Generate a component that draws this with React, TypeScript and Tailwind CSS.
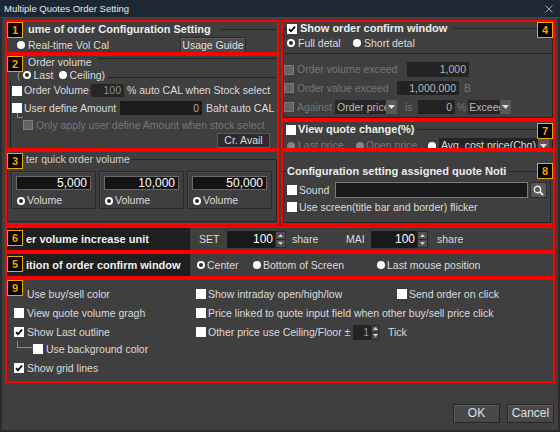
import React from 'react';

// small building blocks for the dark Windows-style dialog

function Badge({ n, className = '' }: { n: string; className?: string }) {
  return (
    <div
      className={`absolute z-10 flex h-[16px] w-[16px] items-center justify-center border border-[#f5a300] bg-black text-[11px] font-bold leading-none text-[#f5a300] ${className}`}
    >
      {n}
    </div>
  );
}

function Check({ checked = false, disabled = false }: { checked?: boolean; disabled?: boolean }) {
  return (
    <span
      className={`flex h-[10px] w-[10px] shrink-0 items-center justify-center ${
        disabled ? 'border border-[#7c7c7c] bg-[#646464]' : 'bg-white'
      }`}
    >
      {checked && (
        <svg width="8" height="8" viewBox="0 0 8 8">
          <path d="M1 4.2 L3 6.2 L7 1.6" stroke="#000" strokeWidth="1.7" fill="none" />
        </svg>
      )}
    </span>
  );
}

function Radio({ ring = false, dim = false }: { ring?: boolean; dim?: boolean }) {
  if (ring) {
    return (
      <span
        className={`h-[8px] w-[8px] shrink-0 rounded-full border-2 bg-[#2a2a2a] ${
          dim ? 'border-[#8a8a8a]' : 'border-white'
        }`}
      />
    );
  }
  return <span className={`h-[8px] w-[8px] shrink-0 rounded-full ${dim ? 'bg-[#858585]' : 'bg-white'}`} />;
}

function Spin({ className = '' }: { className?: string }) {
  return (
    <span className={`flex shrink-0 flex-col border border-[#2a2a2a] bg-[#4e4e4e] ${className}`}>
      <span className="flex flex-1 items-center justify-center border-b border-[#2a2a2a]">
        <svg width="5" height="3" viewBox="0 0 5 3">
          <path d="M0 3 L2.5 0 L5 3 Z" fill="#d0d0d0" />
        </svg>
      </span>
      <span className="flex flex-1 items-center justify-center">
        <svg width="5" height="3" viewBox="0 0 5 3">
          <path d="M0 0 L2.5 3 L5 0 Z" fill="#d0d0d0" />
        </svg>
      </span>
    </span>
  );
}

function DropBtn() {
  return (
    <span className="flex h-full w-[11px] shrink-0 items-center justify-center bg-[#585858]">
      <svg width="7" height="4" viewBox="0 0 7 4">
        <path d="M0 0 L3.5 4 L7 0 Z" fill="#e0e0e0" />
      </svg>
    </span>
  );
}

function Line({ className = '' }: { className?: string }) {
  return <span className={`h-px flex-1 bg-[#232323] ${className}`} />;
}

export default function App() {
  return (
    <div className="flex h-[432px] w-[560px] flex-col overflow-hidden bg-[#3f3f3f] font-['Liberation_Sans',Arial,sans-serif] text-[10.5px] leading-[13px] text-[#dcdcdc]">
      {/* title bar */}
      <div className="flex h-[18px] shrink-0 items-center justify-between border-b border-[#3a4858] bg-[#1d2733] pl-[4px] pr-[7px] text-[9.5px] text-[#e8e8e8]">
        <span>Multiple Quotes Order Setting</span>
        <svg width="8" height="8" viewBox="0 0 8 8">
          <path d="M0.5 0.5 L7.5 7.5 M7.5 0.5 L0.5 7.5" stroke="#9aa3ad" strokeWidth="1" />
        </svg>
      </div>

      <div className="flex flex-1 flex-col border-x-2 border-b-2 border-[#2b2b2b] px-[3px] pt-[2px]">
        <div className="flex gap-[2px]">
          {/* left column */}
          <div className="flex w-[274px] flex-col">
            {/* 1 */}
            <section className="relative h-[34px] overflow-hidden border-2 border-[#ff0000]">
              <Badge n="1" className="left-0 top-0" />
              <div className="flex h-[14px] items-center pl-[21px]">
                <span className="whitespace-nowrap text-[11px] font-bold text-[#ececec]">ume of order Configuration Setting</span>
                <Line className="ml-[10px]" />
              </div>
              <div className="mt-px flex h-[16px] items-center pl-[10px]">
                <Radio />
                <span className="ml-[3px]">Real-time Vol Cal</span>
                <button className="ml-auto mr-[31px] h-[17px] w-[66px] whitespace-nowrap border border-[#2a2a2a] bg-[#4a4a4a] text-[10.5px] text-[#e0e0e0] shadow-[inset_1px_1px_0_#5e5e5e]">
                  Usage Guide
                </button>
              </div>
            </section>

            {/* 2 */}
            <section className="relative h-[96px] overflow-hidden border-2 border-[#ff0000]">
              <Badge n="2" className="left-0 top-0" />
              <div className="flex h-[12px] items-start pl-[21px]">
                <span className="leading-[12px]">Order volume</span>
                <Line className="ml-[6px] mt-[2px]" />
              </div>
              <div className="mt-px flex h-[12px] items-center pl-[10px]">
                <span className="text-[#9a9a9a]">(</span>
                <span className="ml-[2px] flex items-center">
                  <Radio ring />
                </span>
                <span className="ml-[3px] w-[25px]">Last</span>
                <Radio />
                <span className="ml-[3px]">Ceiling)</span>
                <Line className="ml-[3px] mt-[4px]" />
              </div>
              <div className="ml-[3px] flex h-[67px] flex-col border-l border-[#262626] pl-px">
                <div className="mt-[3px] flex h-[13px] items-center">
                  <Check />
                  <span className="ml-[2px] w-[67px] whitespace-nowrap">Order Volume</span>
                  <span className="flex h-[13px] w-[33px] items-center justify-end bg-[#262626] pr-[3px] text-[#8e8e8e]">100</span>
                  <span className="ml-[3px] whitespace-nowrap">% auto CAL when Stock select</span>
                </div>
                <div className="mt-[4px] flex h-[14px] items-center">
                  <Check />
                  <span className="ml-[2px] w-[96px] whitespace-nowrap">User define Amount</span>
                  <span className="flex h-[14px] w-[82px] items-center justify-end bg-[#1c1c1c] pr-[3px] text-[#a8a8a8]">0</span>
                  <span className="ml-[4px] whitespace-nowrap">Baht auto CAL</span>
                </div>
                <div className="mt-[4px] flex h-[12px] items-center">
                  <span className="ml-[5px] -mt-[6px] h-[5px] w-[6px] self-start border-b border-l border-[#8a8a8a]" />
                  <Check disabled />
                  <span className="ml-[3px] whitespace-nowrap text-[#767676]">Only apply user define Amount when stock select</span>
                </div>
                <div className="mt-[2px] flex justify-end pr-[7px]">
                  <button className="h-[15px] w-[53px] whitespace-nowrap border border-[#5a5a5a] bg-[#2b2b2b] text-[10.5px] leading-[13px] text-[#dcdcdc]">
                    Cr. Avail
                  </button>
                </div>
              </div>
            </section>

            {/* 3 */}
            <section className="relative h-[75px] overflow-hidden border-2 border-[#ff0000]">
              <Badge n="3" className="left-0 top-px" />
              <fieldset className="mt-px h-[69px] border border-[#262626]">
                <legend className="ml-[17px] px-px leading-[13px] text-[#cfcfcf]">ter quick order volume</legend>
                <div className="mt-[5px] flex gap-[3px] pl-[3px]">
                  {['5,000', '10,000', '50,000'].map((v) => (
                    <div key={v} className="h-[38px] w-[85px] border border-[#2a2a2a] shadow-[inset_1px_1px_0_#4a4a4a]">
                      <div className="mx-[4px] mt-[4px] flex h-[14px] items-center justify-end border border-[#6a6a6a] bg-[#141414] pr-[3px] text-[12px] text-white">
                        {v}
                      </div>
                      <div className="mt-[4px] flex items-center pl-[5px]">
                        <Radio ring />
                        <span className="ml-[2px]">Volume</span>
                      </div>
                    </div>
                  ))}
                </div>
              </fieldset>
            </section>
          </div>

          {/* right column */}
          <div className="flex w-[274px] flex-col">
            {/* 4 */}
            <section className="relative h-[100px] overflow-hidden border-2 border-[#ff0000]">
              <Badge n="4" className="right-0 top-0" />
              <fieldset className="h-[96px] border border-[#262626]">
                <legend className="ml-[3px] pr-[6px]">
                  <span className="flex h-[13px] items-center">
                    <Check checked />
                    <span className="ml-[3px] whitespace-nowrap text-[11px] font-bold text-[#ececec]">Show order confirm window</span>
                  </span>
                </legend>
                <div className="mt-px flex h-[14px] items-center pl-[3px]">
                  <Radio ring />
                  <span className="ml-[3px] w-[55px]">Full detal</span>
                  <Radio />
                  <span className="ml-[3px]">Short detal</span>
                </div>
                <div className="mt-[3px] h-px bg-[#262626]" />
                <div className="mt-[8px] flex h-[15px] items-center">
                  <Check disabled />
                  <span className="ml-[3px] w-[110px] whitespace-nowrap text-[#767676]">Order volume exceed</span>
                  <span className="flex h-[15px] w-[62px] items-center justify-end bg-[#232323] pr-[3px] text-[#b8b8b8]">1,000</span>
                </div>
                <div className="mt-[4px] flex h-[14px] items-center">
                  <Check disabled />
                  <span className="ml-[3px] w-[100px] whitespace-nowrap text-[#767676]">Order value exceed</span>
                  <span className="flex h-[14px] w-[62px] items-center justify-end bg-[#232323] pr-[3px] text-[#b8b8b8]">1,000,000</span>
                  <span className="ml-[5px] text-[#767676]">B</span>
                </div>
                <div className="mt-[5px] flex h-[14px] items-center">
                  <Check disabled />
                  <span className="ml-[3px] w-[38px] text-[#767676]">Against</span>
                  <span className="flex h-[14px] w-[62px] items-center bg-[#262626]">
                    <span className="flex-1 overflow-hidden whitespace-nowrap pl-[2px] text-[#b8b8b8]">Order price</span>
                    <DropBtn />
                  </span>
                  <span className="ml-[8px] w-[13px] text-[#767676]">is</span>
                  <span className="flex h-[14px] w-[37px] items-center justify-end bg-[#232323] pr-[3px] text-[#b8b8b8]">0</span>
                  <span className="ml-[2px] text-[#767676]">%</span>
                  <span className="ml-[2px] flex h-[14px] w-[43px] items-center bg-[#262626]">
                    <span className="flex-1 overflow-hidden whitespace-nowrap pl-[1px] text-[#b8b8b8]">Exceed</span>
                    <DropBtn />
                  </span>
                </div>
              </fieldset>
            </section>

            {/* 7 */}
            <section className="relative h-[30px] overflow-hidden border-2 border-[#ff0000]">
              <Badge n="7" className="right-0 top-px" />
              <fieldset className="mt-px h-[40px] border border-[#262626]">
                <legend className="ml-[2px] pr-[2px]">
                  <span className="flex h-[13px] items-center">
                    <Check />
                    <span className="ml-[2px] whitespace-nowrap text-[11px] font-bold text-[#ececec]">View quote change(%)</span>
                  </span>
                </legend>
                <div className="mt-[2px] flex h-[15px] items-center pl-[3px]">
                  <Radio dim />
                  <span className="ml-[3px] w-[58px] text-[#767676]">Last price</span>
                  <Radio dim />
                  <span className="ml-[2px] w-[62px] text-[#767676]">Open price</span>
                  <Radio />
                  <span className="ml-[3px] flex h-[15px] w-[110px] items-center bg-[#232323]">
                    <span className="flex-1 overflow-hidden whitespace-nowrap pl-[2px]">Avg. cost price(Chg)</span>
                    <DropBtn />
                  </span>
                </div>
              </fieldset>
            </section>

            {/* 8 */}
            <section className="relative h-[75px] overflow-hidden border-2 border-[#ff0000]">
              <Badge n="8" className="right-0 top-[11px]" />
              <fieldset className="mr-[2px] mt-[13px] h-[58px] border border-[#262626]">
                <legend className="ml-[3px] pr-[2px] text-[11px] font-bold leading-[13px] text-[#ececec]">
                  Configuration setting assigned quote Noti
                </legend>
                <div className="mt-[4px] flex h-[16px] items-center pl-[3px]">
                  <Check />
                  <span className="ml-[2px] w-[36px]">Sound</span>
                  <span className="h-[16px] w-[193px] border border-[#7a7a7a] bg-[#1a1a1a]" />
                  <span className="ml-[2px] flex h-[16px] w-[17px] items-center justify-center border border-[#2a2a2a] bg-[#575757]">
                    <svg width="11" height="11" viewBox="0 0 11 11">
                      <circle cx="4.5" cy="4.5" r="3.2" stroke="#e8e8e8" strokeWidth="1.4" fill="none" />
                      <path d="M7 7 L10 10" stroke="#e8e8e8" strokeWidth="1.8" />
                    </svg>
                  </span>
                </div>
                <div className="mt-[2px] flex h-[14px] items-center pl-[3px]">
                  <Check />
                  <span className="ml-[2px] whitespace-nowrap">Use screen(title bar and border) flicker</span>
                </div>
              </fieldset>
            </section>
          </div>
        </div>

        {/* 6 */}
        <section className="relative mt-px flex h-[26px] items-stretch overflow-hidden border-2 border-[#ff0000]">
          <Badge n="6" className="left-0 top-[2px]" />
          <div className="flex w-[183px] items-center bg-[#1f1f1f] pl-[19px] text-[11px] font-bold text-[#f0f0f0]">
            <span className="whitespace-nowrap">er volume increase unit</span>
          </div>
          <div className="flex items-center">
            <span className="ml-[9px] w-[28px]">SET</span>
            <span className="flex h-[17px] w-[48px] items-center justify-end bg-[#1a1a1a] pr-[2px] text-[12px] text-white">100</span>
            <Spin className="h-[17px] w-[11px]" />
            <span className="ml-[6px] w-[54px]">share</span>
            <span className="w-[25px]">MAI</span>
            <span className="flex h-[17px] w-[46px] items-center justify-end bg-[#1a1a1a] pr-[2px] text-[12px] text-white">100</span>
            <Spin className="h-[17px] w-[11px]" />
            <span className="ml-[9px]">share</span>
          </div>
        </section>

        {/* 5 */}
        <section className="relative flex h-[26px] items-stretch overflow-hidden border-2 border-[#ff0000]">
          <Badge n="5" className="left-0 top-[2px]" />
          <div className="flex w-[183px] items-center bg-[#1f1f1f] pl-[19px] text-[11px] font-bold text-[#f0f0f0]">
            <span className="whitespace-nowrap">ition of order confirm window</span>
          </div>
          <div className="flex items-center pl-[7px]">
            <Radio ring />
            <span className="ml-[2px] w-[46px]">Center</span>
            <Radio />
            <span className="ml-[2px] w-[114px]">Bottom of Screen</span>
            <Radio />
            <span className="ml-[2px]">Last mouse position</span>
          </div>
        </section>

        {/* 9 */}
        <section className="relative flex h-[105px] overflow-hidden border-2 border-[#ff0000] pl-[7px] pt-[7px]">
          <Badge n="9" className="left-0 top-0" />
          <div className="flex w-[182px] flex-col">
            <div className="flex h-[14px] items-center">
              {/* its checkbox sits under the badge */}
              <span className="h-[10px] w-[10px] shrink-0" />
              <span className="ml-[3px]">Use buy/sell color</span>
            </div>
            <div className="mt-[5px] flex h-[14px] items-center">
              <Check />
              <span className="ml-[3px]">View quote volume gragh</span>
            </div>
            <div className="mt-[5px] flex h-[14px] items-center">
              <Check checked />
              <span className="ml-[3px]">Show Last outline</span>
            </div>
            <div className="mt-[3px] flex h-[14px] items-center">
              <span className="-mt-[1px] ml-[3px] h-[7px] w-[16px] self-start border-b border-l border-[#8a8a8a]" />
              <Check />
              <span className="ml-[3px]">Use background color</span>
            </div>
            <div className="mt-[5px] flex h-[14px] items-center">
              <Check checked />
              <span className="ml-[3px]">Show grid lines</span>
            </div>
          </div>
          <div className="flex flex-col">
            <div className="flex h-[14px] items-center">
              <Check />
              <span className="ml-[2px] w-[189px]">Show intraday open/high/low</span>
              <Check />
              <span className="ml-[2px]">Send order on click</span>
            </div>
            <div className="mt-[5px] flex h-[14px] items-center">
              <Check />
              <span className="ml-[2px] whitespace-nowrap">Price linked to quote input field when other buy/sell price click</span>
            </div>
            <div className="mt-[5px] flex h-[14px] items-center">
              <Check />
              <span className="ml-[2px] w-[145px] whitespace-nowrap">Other price use Ceiling/Floor ±</span>
              <span className="flex h-[15px] w-[18px] items-center justify-end bg-[#232323] pr-[2px] text-[#9a9a9a]">1</span>
              <Spin className="h-[15px] w-[8px]" />
              <span className="ml-[9px]">Tick</span>
            </div>
          </div>
        </section>

        {/* buttons */}
        <div className="mt-[21px] flex justify-end gap-[7px] pr-px">
          <button className="h-[19px] w-[47px] border border-[#262626] bg-[#484848] text-[12px] text-[#e0e0e0] shadow-[inset_1px_1px_0_#5c5c5c]">
            OK
          </button>
          <button className="h-[19px] w-[47px] border border-[#262626] bg-[#484848] text-[12px] text-[#e0e0e0] shadow-[inset_1px_1px_0_#5c5c5c]">
            Cancel
          </button>
        </div>
      </div>
    </div>
  );
}
